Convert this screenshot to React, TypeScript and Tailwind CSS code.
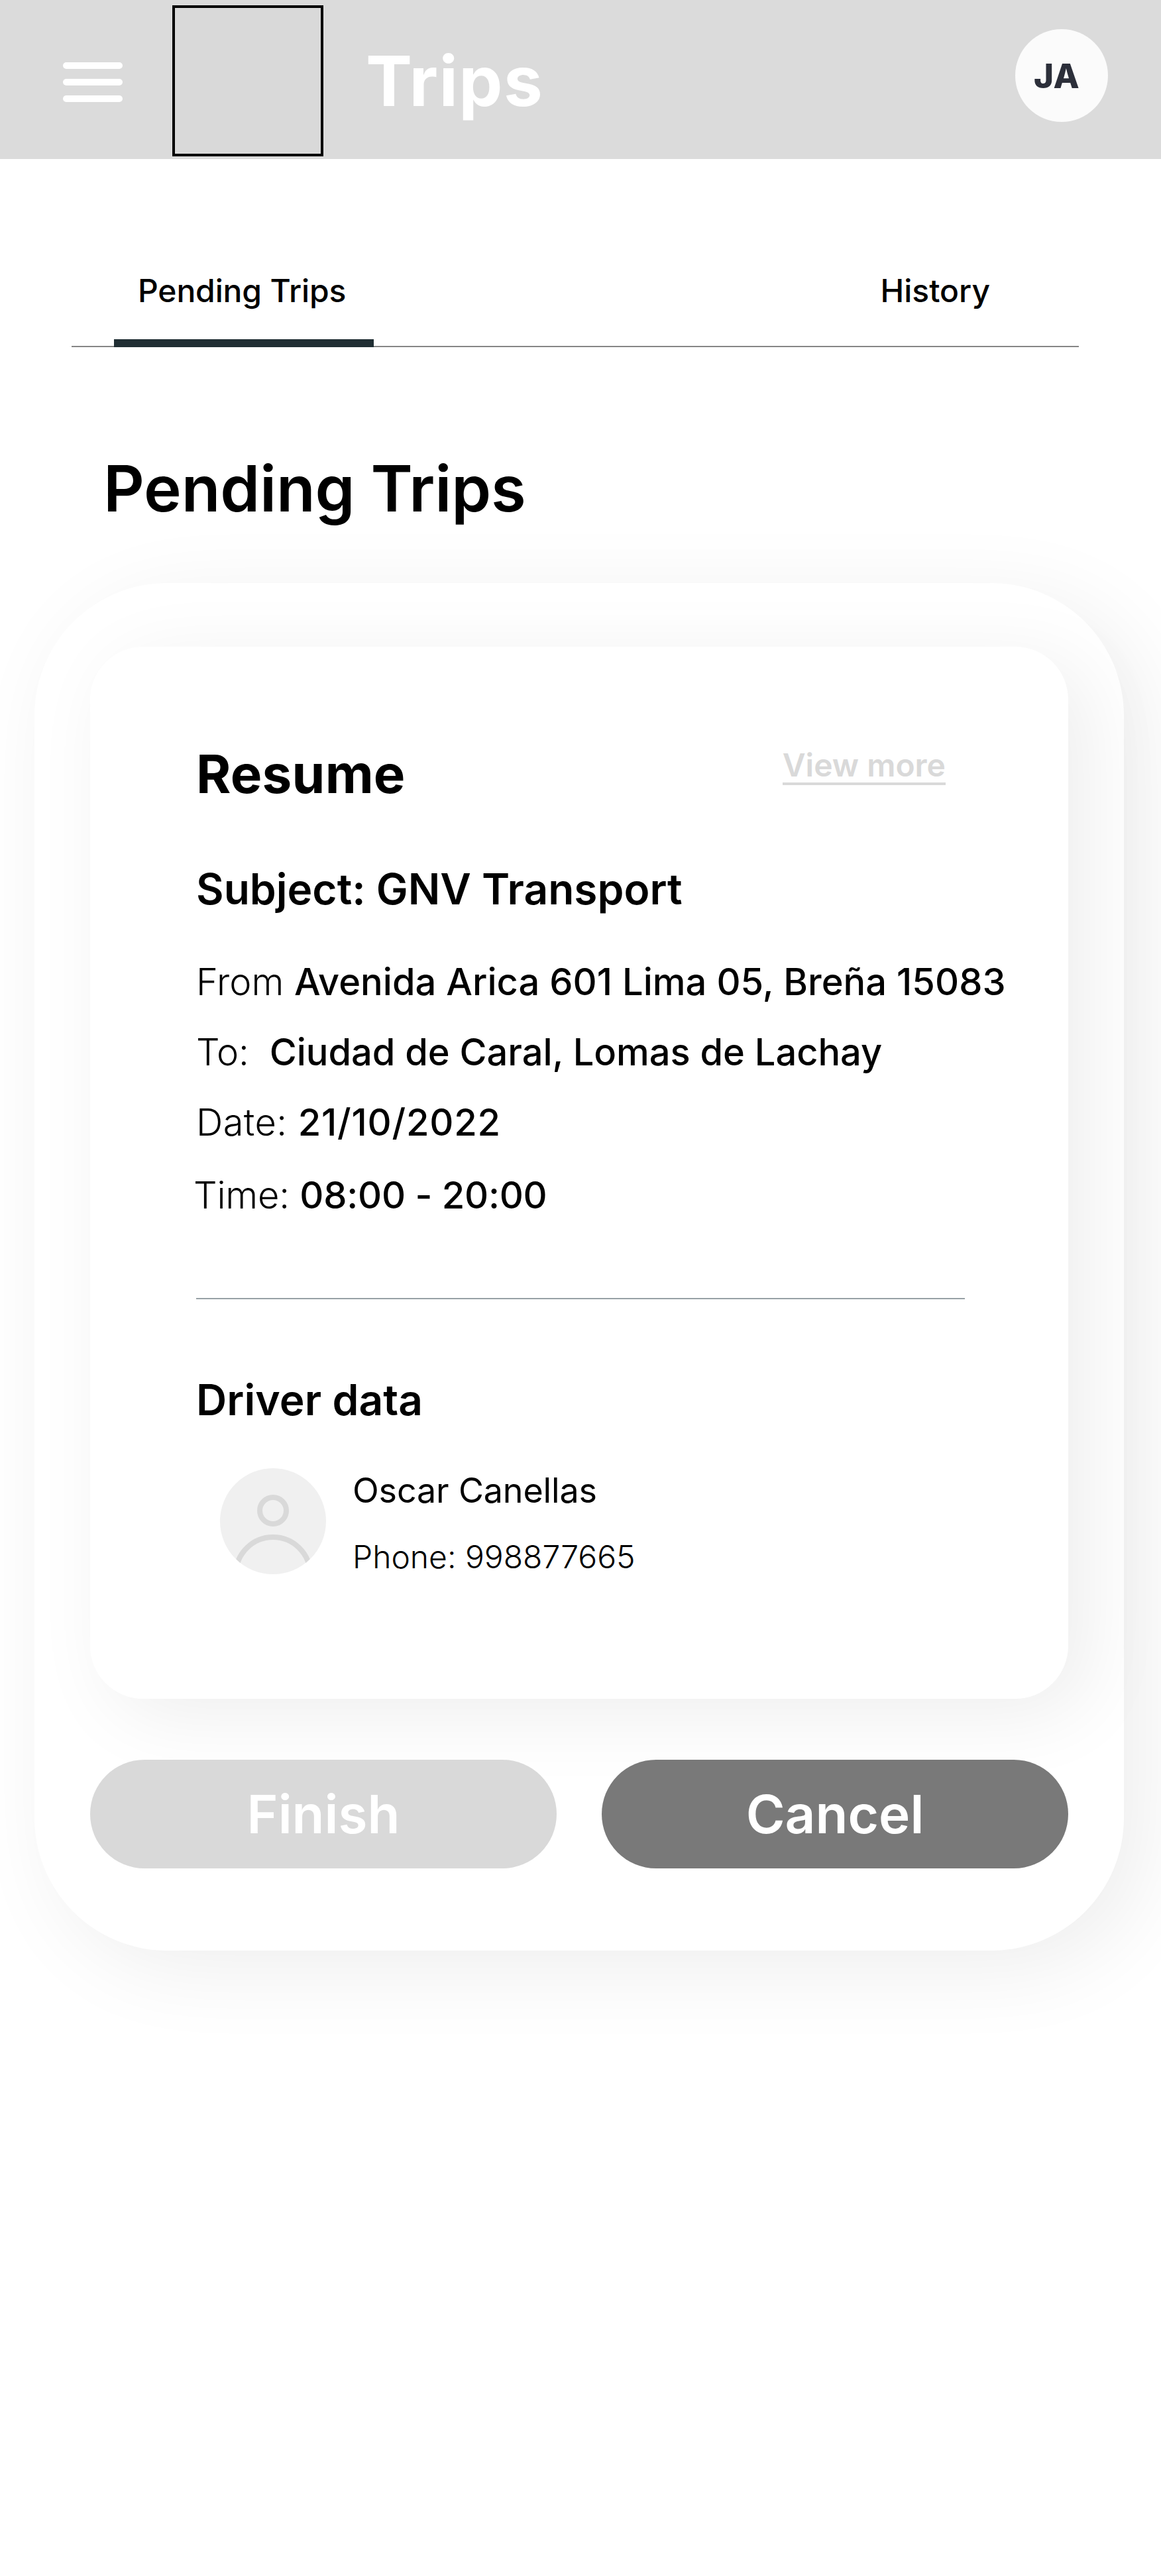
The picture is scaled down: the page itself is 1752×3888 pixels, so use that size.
import React from 'react';

function MenuIcon() {
  return (
    <button aria-label="Menu" className="mt-[94px] ml-[95px] flex h-[60px] w-[90px] flex-col justify-between">
      <span className="h-[10px] w-full rounded-[5px] bg-white" />
      <span className="h-[10px] w-full rounded-[5px] bg-white" />
      <span className="h-[10px] w-full rounded-[5px] bg-white" />
    </button>
  );
}

function Header() {
  return (
    <header className="flex h-[240px] items-start bg-[#dbdbdb]">
      <MenuIcon />
      <div className="mt-2 ml-[75px] size-[228px] border-4 border-black bg-[#d9d9d9]" />
      <h1 className="mt-[62px] ml-[64px] text-[105px] leading-[120px] font-bold tracking-[1.4px] text-white">Trips</h1>
      <div className="mt-[44px] mr-[80px] ml-auto flex size-[140px] items-center rounded-full bg-[#fbfbfb] pl-[28px] text-[51px] leading-none font-extrabold tracking-[0.5px] text-[#2c2f3a]">
        JA
      </div>
    </header>
  );
}

function Tabs() {
  return (
    <nav className="mt-[169px] ml-[108px] flex h-[115px] w-[1520px] items-stretch justify-between border-b-2 border-[#868686] text-[48px] leading-[60px] font-medium">
      <a className="-mb-[2px] ml-[64px] w-[392px] border-b-[12px] border-[#202e33] pl-[36px] tracking-[-0.15px]">Pending Trips</a>
      <a className="mr-[134px]">History</a>
    </nav>
  );
}

type RowProps = { label: string; value: string; className?: string; valueClassName?: string };

function DetailRow({ label, value, className = '', valueClassName = '' }: RowProps) {
  return (
    <p className={`h-[70px] text-[56px] leading-[70px] font-light whitespace-pre ${className}`}>
      {label}
      <span className={`font-medium ${valueClassName}`}>{value}</span>
    </p>
  );
}

function DriverAvatar() {
  return (
    <svg className="size-[160px] shrink-0" viewBox="0 0 160 160" fill="none">
      <defs>
        <clipPath id="avatar">
          <circle cx="80" cy="80" r="80" />
        </clipPath>
      </defs>
      <circle cx="80" cy="80" r="80" fill="#f0f0f0" />
      <g clipPath="url(#avatar)" stroke="#d9d9d9" strokeWidth="8">
        <circle cx="80" cy="64" r="20" />
        <circle cx="80" cy="160" r="56" />
      </g>
    </svg>
  );
}

function ResumeCard() {
  return (
    <section className="h-[1588px] w-[1476px] rounded-[80px] bg-white pt-[142px] pl-[160px] shadow-[32px_24px_120px_rgba(0,0,0,0.07)]">
      <div className="flex h-[100px] items-start justify-between pr-[185px]">
        <h3 className="text-[80px] leading-[100px] font-bold tracking-[0.2px]">Resume</h3>
        <a className="mt-[7px] h-[60px] border-b-4 border-[#d9d9d9] text-[48px] leading-[60px] font-semibold text-[#d9d9d9]">
          View more
        </a>
      </div>
      <h4 className="mt-[84px] text-[64px] leading-[80px] font-semibold">Subject: GNV Transport</h4>
      <DetailRow
        className="mt-[65px]"
        label="From "
        value="Avenida Arica 601 Lima 05, Breña 15083"
        valueClassName="tracking-[0.03px]"
      />
      <DetailRow
        className="mt-[36px] tracking-[-0.2px]"
        label="To:  "
        value="Ciudad de Caral, Lomas de Lachay"
        valueClassName="tracking-[-0.05px]"
      />
      <DetailRow
        className="mt-[36px] tracking-[0.4px]"
        label="Date: "
        value="21/10/2022"
        valueClassName="tracking-[0.8px]"
      />
      <DetailRow
        className="mt-[40px] -ml-[4px] tracking-[-0.2px]"
        label="Time: "
        value="08:00 - 20:00"
        valueClassName="tracking-[-0.25px]"
      />
      <hr className="mt-[120px] w-[1160px] border-t-2 border-[#98a1a6]" />
      <h4 className="mt-[112px] text-[64px] leading-[80px] font-semibold tracking-[0.1px]">Driver data</h4>
      <div className="mt-[63px] ml-[36px] flex gap-[40px]">
        <DriverAvatar />
        <div>
          <p className="mt-px text-[52px] leading-[66px] tracking-[-0.15px]">Oscar Canellas</p>
          <p className="mt-[37px] text-[48px] leading-[60px] font-light">Phone: 998877665</p>
        </div>
      </div>
    </section>
  );
}

export default function App() {
  return (
    <main className="h-[3888px] w-[1752px] overflow-hidden bg-white font-['Inter',sans-serif] text-black">
      <Header />
      <Tabs />
      <h2 className="mt-[153px] ml-[156px] text-[96px] leading-[120px] font-semibold tracking-[-0.15px]">Pending Trips</h2>
      <section className="mt-[83px] ml-[52px] h-[2064px] w-[1644px] rounded-[200px] bg-white px-[84px] pt-[96px] shadow-[32px_26px_130px_rgba(0,0,0,0.07)]">
        <ResumeCard />
        <div className="relative mt-[92px] flex justify-between text-[80px] leading-[164px] font-semibold text-white">
          <button className="h-[164px] w-[704px] rounded-full bg-[#d9d9d9]">Finish</button>
          <button className="h-[164px] w-[704px] rounded-full bg-[#797979]">Cancel</button>
        </div>
      </section>
    </main>
  );
}
